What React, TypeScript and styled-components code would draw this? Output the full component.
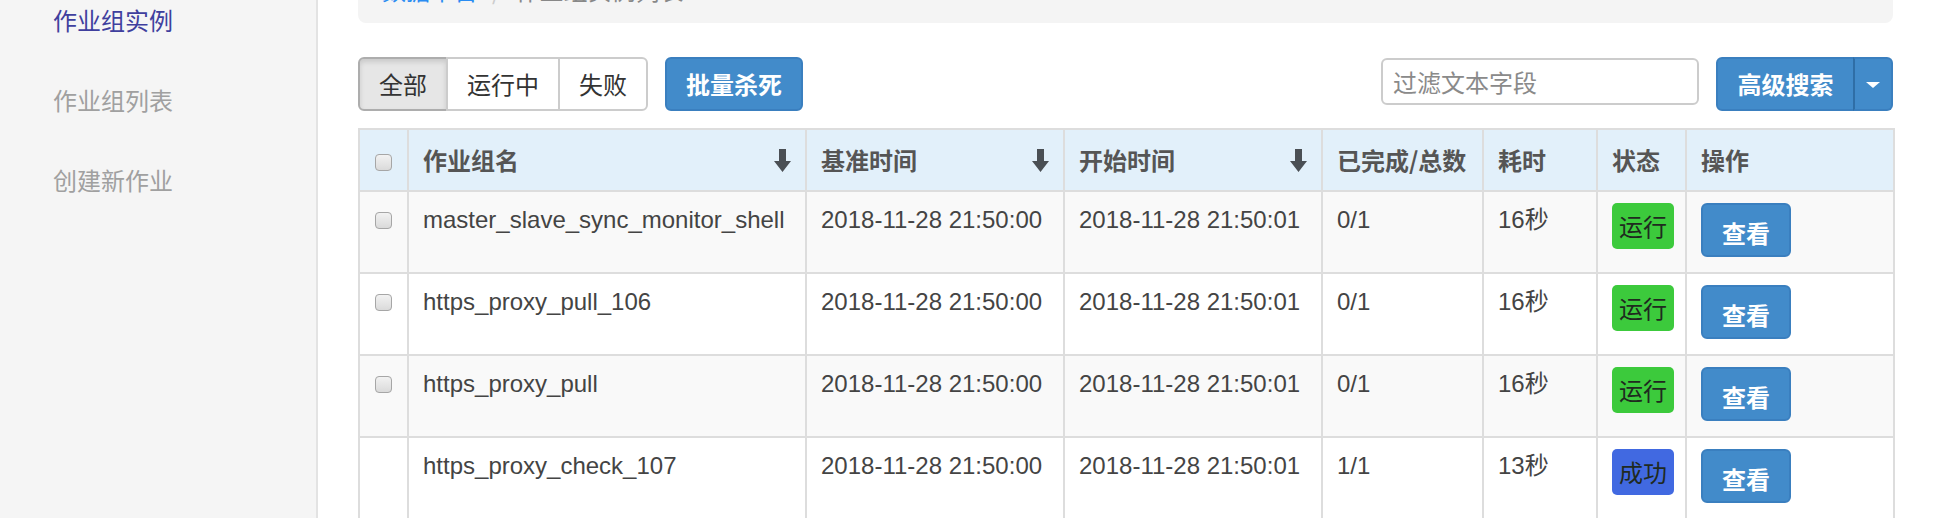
import React from "react";
import styled, { createGlobalStyle } from "styled-components";

const GlobalStyle = createGlobalStyle`
  html, body { margin: 0; padding: 0; background: #fff; overflow: hidden; }
  body {
    font-family: "Liberation Sans", "Noto Sans CJK SC", sans-serif;
    color: #333;
  }
  * { box-sizing: border-box; }
`;

const Page = styled.div`
  display: flex;
  margin-top: -37px;
  min-height: calc(100vh + 37px);
`;

const Sidebar = styled.nav`
  flex: 0 0 318px;
  width: 318px;
  background: #f5f5f5;
  border-right: 2px solid #e3e3e3;
  padding-top: 16px;
`;

const NavItem = styled.div<{ $active?: boolean }>`
  height: 80px;
  display: flex;
  align-items: center;
  padding-left: 53px;
  font-size: 24px;
  font-family: "Noto Sans CJK SC", sans-serif;
  color: ${(p) => (p.$active ? "#3f3f9e" : "#a0a0a0")};
`;

const Main = styled.main`
  flex: 1;
  min-width: 0;
  padding: 0 57px 0 40px;
`;

const Breadcrumb = styled.div`
  display: flex;
  align-items: center;
  background: #f4f4f4;
  border-radius: 8px;
  padding: 10px 24px 16px;
  line-height: 34px;
  font-size: 24px;
  font-family: "Noto Sans CJK SC", sans-serif;
`;

const Crumb = styled.span<{ $link?: boolean }>`
  color: ${(p) => (p.$link ? "#2a8cf2" : "#888")};
`;

const CrumbSep = styled.span`
  color: #ccc;
  padding: 0 14px;
`;

const Toolbar = styled.div`
  display: flex;
  justify-content: space-between;
  align-items: flex-start;
  margin-top: 34px;
`;

const ToolGroup = styled.div`
  display: flex;
  align-items: flex-start;
  gap: 17px;
`;

const BtnGroup = styled.div`
  display: flex;
`;

const Btn = styled.button<{ $active?: boolean; $primary?: boolean; $pos?: "first" | "mid" | "last" | "solo" }>`
  height: 54px;
  padding: 0 19px;
  font-size: 24px;
  line-height: 34px;
  font-family: "Noto Sans CJK SC", sans-serif;
  font-weight: ${(p) => (p.$primary ? 700 : 400)};
  color: ${(p) => (p.$primary ? "#fff" : "#333")};
  background: ${(p) => (p.$primary ? "#428bca" : p.$active ? "#e6e6e6" : "#fff")};
  border: 2px solid ${(p) => (p.$primary ? "#3a7fbf" : p.$active ? "#adadad" : "#ccc")};
  box-shadow: ${(p) => (p.$active ? "inset 0 3px 5px rgba(0,0,0,0.125)" : "none")};
  border-radius: ${(p) =>
    p.$pos === "first" ? "6px 0 0 6px" : p.$pos === "mid" ? "0" : p.$pos === "last" ? "0 6px 6px 0" : "6px"};
  margin-left: ${(p) => (p.$pos === "mid" || p.$pos === "last" ? "-2px" : "0")};
  cursor: pointer;
  display: flex;
  align-items: center;
  justify-content: center;
`;

const SearchBtn = styled(Btn)`
  width: 139px;
`;

const CaretBtn = styled(Btn)`
  width: 40px;
  padding: 0;
  border-left-color: #2f6ea6;
`;

const Caret = styled.span`
  width: 0;
  height: 0;
  border-left: 7px solid transparent;
  border-right: 7px solid transparent;
  border-top: 6px solid #fff;
  margin-top: 2px;
`;

const FilterInput = styled.input`
  width: 318px;
  height: 47px;
  margin-top: 1px;
  border: 2px solid #ccc;
  border-radius: 6px;
  padding: 0 10px;
  font-size: 24px;
  font-family: "Noto Sans CJK SC", sans-serif;
  color: #555;
  outline: none;
  &::placeholder { color: #8a8a8a; }
`;

const Table = styled.table`
  width: 100%;
  margin-top: 17px;
  border-collapse: collapse;
  table-layout: fixed;
  border: 2px solid #ddd;
`;

const Th = styled.th`
  background: #e2f0fa;
  border: 2px solid #ddd;
  padding: 13px 14px;
  line-height: 34px;
  font-size: 24px;
  font-family: "Noto Sans CJK SC", sans-serif;
  font-weight: 700;
  color: #555;
  text-align: left;
  vertical-align: middle;
`;

const ThInner = styled.div`
  display: flex;
  align-items: center;
  justify-content: space-between;
`;

const CheckTh = styled(Th)`
  padding: 13px 0;
  text-align: center;
`;

const Tr = styled.tr<{ $striped?: boolean }>`
  background: ${(p) => (p.$striped ? "#f9f9f9" : "#fff")};
`;

const Td = styled.td<{ $cjk?: boolean }>`
  border: 2px solid #ddd;
  padding: 11px 14px 15px;
  line-height: 34px;
  font-size: 24px;
  color: #444;
  vertical-align: top;
  white-space: nowrap;
  overflow: hidden;
  font-family: ${(p) => (p.$cjk ? '"Liberation Sans", "Noto Sans CJK SC", sans-serif' : '"Liberation Sans", sans-serif')};
`;

const CheckTd = styled(Td)`
  padding: 11px 0 15px;
  text-align: center;
`;

const Check = styled.input`
  appearance: none;
  -webkit-appearance: none;
  width: 17px;
  height: 17px;
  margin: 0;
  border: 1.5px solid #a6a6a6;
  border-radius: 4px;
  background: linear-gradient(#f2f2f2, #dadada);
  vertical-align: middle;
  position: relative;
  top: -1px;
`;

const Badge = styled.span<{ $kind: "run" | "ok" }>`
  display: inline-block;
  vertical-align: top;
  padding: 6px 7px;
  line-height: 34px;
  font-size: 24px;
  font-family: "Noto Sans CJK SC", sans-serif;
  border-radius: 5px;
  color: #1f2a1f;
  background: ${(p) => (p.$kind === "run" ? "#3cca3c" : "#4169e1")};
`;

const ViewBtn = styled.button`
  display: inline-block;
  vertical-align: top;
  height: 54px;
  padding: 4px 19px 0;
  font-size: 24px;
  font-family: "Noto Sans CJK SC", sans-serif;
  font-weight: 700;
  color: #fff;
  background: #428bca;
  border: 2px solid #3a7fbf;
  border-radius: 6px;
  cursor: pointer;
`;

const SortArrow = () => (
  <svg width="17" height="23" viewBox="0 0 17 23" aria-hidden="true">
    <path d="M5 0h7v12h5L8.5 23 0 12h5z" fill="#4a4f54" />
  </svg>
);

type Row = {
  name: string;
  base: string;
  start: string;
  done: string;
  cost: string;
  status: "run" | "ok";
  checkbox: boolean;
};

const rows: Row[] = [
  { name: "master_slave_sync_monitor_shell", base: "2018-11-28 21:50:00", start: "2018-11-28 21:50:01", done: "0/1", cost: "16秒", status: "run", checkbox: true },
  { name: "https_proxy_pull_106", base: "2018-11-28 21:50:00", start: "2018-11-28 21:50:01", done: "0/1", cost: "16秒", status: "run", checkbox: true },
  { name: "https_proxy_pull", base: "2018-11-28 21:50:00", start: "2018-11-28 21:50:01", done: "0/1", cost: "16秒", status: "run", checkbox: true },
  { name: "https_proxy_check_107", base: "2018-11-28 21:50:00", start: "2018-11-28 21:50:01", done: "1/1", cost: "13秒", status: "ok", checkbox: false },
];

const colWidths = [49, 398, 258, 258, 161, 114, 89, 208];

export default function App() {
  return (
    <>
      <GlobalStyle />
      <Page>
        <Sidebar>
          <NavItem $active>作业组实例</NavItem>
          <NavItem>作业组列表</NavItem>
          <NavItem>创建新作业</NavItem>
        </Sidebar>
        <Main>
          <Breadcrumb>
            <Crumb $link>数据平台</Crumb>
            <CrumbSep>/</CrumbSep>
            <Crumb>作业组实例列表</Crumb>
          </Breadcrumb>

          <Toolbar>
            <ToolGroup>
              <BtnGroup>
                <Btn $active $pos="first">全部</Btn>
                <Btn $pos="mid">运行中</Btn>
                <Btn $pos="last">失败</Btn>
              </BtnGroup>
              <Btn $primary $pos="solo">批量杀死</Btn>
            </ToolGroup>
            <ToolGroup>
              <FilterInput placeholder="过滤文本字段" />
              <BtnGroup>
                <SearchBtn $primary $pos="first">高级搜索</SearchBtn>
                <CaretBtn $primary $pos="last">
                  <Caret />
                </CaretBtn>
              </BtnGroup>
            </ToolGroup>
          </Toolbar>

          <Table>
            <colgroup>
              {colWidths.map((w, i) => (
                <col key={i} style={{ width: w }} />
              ))}
            </colgroup>
            <thead>
              <tr>
                <CheckTh>
                  <Check type="checkbox" />
                </CheckTh>
                <Th>
                  <ThInner>
                    作业组名
                    <SortArrow />
                  </ThInner>
                </Th>
                <Th>
                  <ThInner>
                    基准时间
                    <SortArrow />
                  </ThInner>
                </Th>
                <Th>
                  <ThInner>
                    开始时间
                    <SortArrow />
                  </ThInner>
                </Th>
                <Th>已完成/总数</Th>
                <Th>耗时</Th>
                <Th>状态</Th>
                <Th>操作</Th>
              </tr>
            </thead>
            <tbody>
              {rows.map((r, i) => (
                <Tr key={r.name} $striped={i % 2 === 0}>
                  <CheckTd>{r.checkbox && <Check type="checkbox" />}</CheckTd>
                  <Td>{r.name}</Td>
                  <Td>{r.base}</Td>
                  <Td>{r.start}</Td>
                  <Td>{r.done}</Td>
                  <Td $cjk>{r.cost}</Td>
                  <Td>
                    <Badge $kind={r.status}>{r.status === "run" ? "运行" : "成功"}</Badge>
                  </Td>
                  <Td>
                    <ViewBtn>查看</ViewBtn>
                  </Td>
                </Tr>
              ))}
            </tbody>
          </Table>
        </Main>
      </Page>
    </>
  );
}
